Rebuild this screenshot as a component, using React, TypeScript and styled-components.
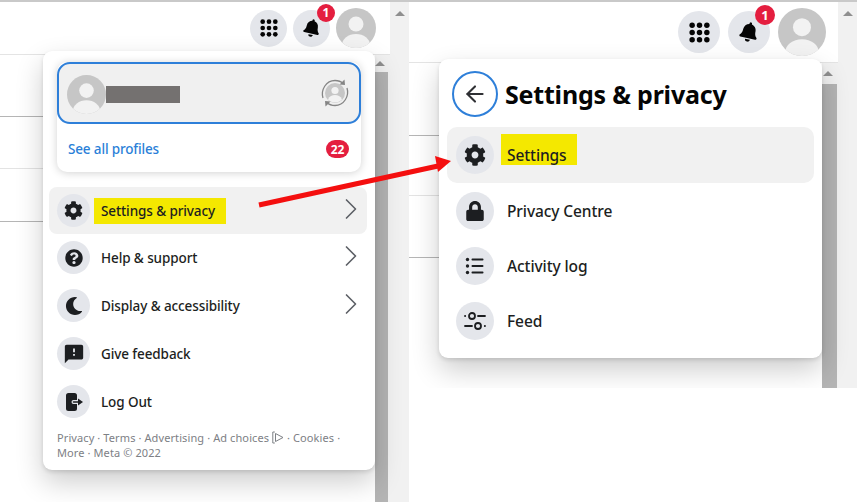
import { ReactNode } from 'react'
import styled, { createGlobalStyle } from 'styled-components'
import { FaBell, FaCog, FaLock, FaMoon, FaQuestionCircle } from 'react-icons/fa'
import { MdFeedback } from 'react-icons/md'
import { ArrowLeft, ChevronRight } from 'lucide-react'

const GlobalStyle = createGlobalStyle`
  body {
    margin: 0;
    background: #fff;
    font-family: "Noto Sans", "Open Sans", Arial, sans-serif;
    color: #1c1e21;
  }
`

const Page = styled.div`
  position: relative;
  display: flex;
  width: 857px;
  height: 502px;
  overflow: hidden;
  background: #fff;
`

const Shot = styled.div<{ $width: number; $height: number }>`
  position: relative;
  display: flex;
  flex: none;
  width: ${(p) => p.$width}px;
  height: ${(p) => p.$height}px;
  overflow: hidden;
  border-top: 2px solid #c9c9c9;
  box-sizing: border-box;
`

const Browser = styled.div`
  display: flex;
  flex: 1;
  flex-direction: column;
  min-width: 0;
`

const Header = styled.div<{ $height: number; $gap: number; $pad: number }>`
  display: flex;
  flex: none;
  align-items: center;
  justify-content: flex-end;
  gap: ${(p) => p.$gap}px;
  height: ${(p) => p.$height}px;
  padding-right: ${(p) => p.$pad}px;
  border-bottom: 1px solid #e4e4e4;
  box-sizing: border-box;
`

const HeaderButton = styled.div<{ $size: number }>`
  position: relative;
  display: flex;
  align-items: center;
  justify-content: center;
  width: ${(p) => p.$size}px;
  height: ${(p) => p.$size}px;
  border-radius: 50%;
  background: #e4e6eb;
  color: #050505;
`

const TiltedBell = styled(FaBell)`
  transform: rotate(12deg);
`

const Badge = styled.span<{ $size: number; $font: number }>`
  position: absolute;
  top: ${(p) => -p.$size / 3.2}px;
  right: -5px;
  display: flex;
  align-items: center;
  justify-content: center;
  width: ${(p) => p.$size}px;
  height: ${(p) => p.$size}px;
  border-radius: 50%;
  background: #e41e3f;
  color: #fff;
  font-size: ${(p) => p.$font}px;
  font-weight: 700;
`

const Body = styled.div`
  display: flex;
  flex: 1;
  min-height: 0;
`

const Content = styled.div`
  flex: 1;
`

const ContentRow = styled.div<{ $height: number; $line: string }>`
  height: ${(p) => p.$height}px;
  border-bottom: 1px solid ${(p) => p.$line};
`

const ScrollTrack = styled.div<{ $width: number; $thumb: number; $inset: number }>`
  display: flex;
  flex: none;
  flex-direction: column;
  width: ${(p) => p.$width}px;
  background: #f1f1f1;
  &::after {
    content: '';
    flex: 1;
    margin-top: ${(p) => p.$thumb}px;
    margin-right: ${(p) => p.$inset}px;
    background: #b4b4b4;
  }
`

const OuterTrack = styled.div`
  display: flex;
  flex: none;
  justify-content: center;
  width: 19px;
  padding-top: 9px;
  box-sizing: border-box;
  background: #f1f1f1;
`

const ScrollArrow = styled.span`
  flex: none;
  width: 0;
  height: 0;
  border-left: 5px solid transparent;
  border-right: 5px solid transparent;
  border-bottom: 5px solid #8f8f8f;
`

const InnerArrow = styled(ScrollArrow)<{ $top: number; $left: number }>`
  position: absolute;
  top: ${(p) => p.$top}px;
  left: ${(p) => p.$left}px;
`

const Menu = styled.div<{ $left: number; $top: number; $width: number; $height: number; $padLeft: number; $padRight: number }>`
  position: absolute;
  left: ${(p) => p.$left}px;
  top: ${(p) => p.$top}px;
  width: ${(p) => p.$width}px;
  height: ${(p) => p.$height}px;
  padding: 0 ${(p) => p.$padRight}px 0 ${(p) => p.$padLeft}px;
  box-sizing: border-box;
  background: #fff;
  border-radius: 9px;
  box-shadow: 0 12px 28px rgba(0, 0, 0, 0.2), 0 2px 4px rgba(0, 0, 0, 0.12);
`

const ProfileCard = styled.div`
  margin: 11px 6px 15px 8px;
  height: 110px;
  border-radius: 10px;
  box-shadow: 0 1px 8px rgba(0, 0, 0, 0.18);
`

const ActiveProfile = styled.div`
  display: flex;
  align-items: center;
  height: 62px;
  padding: 2px 9px 0 8px;
  box-sizing: border-box;
  border: 2px solid #2e7fd9;
  border-radius: 13px;
  background: #f0f0f0;
`

const RedactedName = styled.div`
  width: 74px;
  height: 17px;
  background: #747170;
`

const SwitchSlot = styled.div`
  margin: -3px 0 0 auto;
  display: flex;
`

const ProfilesFooter = styled.div`
  display: flex;
  align-items: center;
  justify-content: space-between;
  height: 48px;
  padding: 1px 12px 0 11px;
  color: #2a7fd8;
  font-size: 13.5px;
  font-weight: 500;
  letter-spacing: -0.15px;
`

const CountPill = styled.span`
  display: flex;
  align-items: center;
  justify-content: center;
  width: 23px;
  height: 18px;
  border-radius: 9px;
  background: #e41e3f;
  color: #fff;
  font-size: 12px;
  font-weight: 700;
`

const Row = styled.div<{ $height: number; $active?: boolean; $radius: number; $padX: number; $gap: number }>`
  display: flex;
  align-items: center;
  gap: ${(p) => p.$gap}px;
  height: ${(p) => p.$height}px;
  padding: 0 ${(p) => p.$padX}px;
  box-sizing: border-box;
  border-radius: ${(p) => p.$radius}px;
  background: ${(p) => (p.$active ? '#f1f1f1' : 'transparent')};
`

const RowIcon = styled.div<{ $size: number }>`
  display: flex;
  flex: none;
  align-items: center;
  justify-content: center;
  width: ${(p) => p.$size}px;
  height: ${(p) => p.$size}px;
  border-radius: 50%;
  background: #e4e6eb;
  color: #1c1e21;
`

const RowLabel = styled.span<{ $size: number }>`
  font-size: ${(p) => p.$size}px;
  font-weight: 500;
  letter-spacing: -0.1px;
`

const SmallMark = styled.mark`
  display: flex;
  align-items: center;
  width: 132px;
  height: 26px;
  margin-left: -7px;
  padding-left: 7px;
  box-sizing: border-box;
  background: #f4e800;
  color: inherit;
`

const LargeMark = styled.mark`
  display: flex;
  align-items: flex-end;
  width: 76px;
  height: 31px;
  margin: -12px 0 0 -6px;
  padding-left: 6px;
  line-height: 20px;
  box-sizing: border-box;
  background: #f4e800;
  color: inherit;
`

const RowChevron = styled(ChevronRight)`
  margin-left: auto;
  margin-right: -10px;
  margin-top: -3px;
  color: #5d6066;
`

const Legal = styled.div`
  margin: 4px 8px 0;
  color: #7d8085;
  font-size: 11px;
  line-height: 15px;
  letter-spacing: 0.1px;
`

const Links = styled.div`
  white-space: nowrap;
`

const TitleRow = styled.div`
  display: flex;
  align-items: center;
  gap: 7px;
  height: 66px;
  padding: 2px 0 0 5px;
`

const BackButton = styled.div`
  display: flex;
  align-items: center;
  justify-content: center;
  width: 46px;
  height: 46px;
  box-sizing: border-box;
  border: 2px solid #2e7fd9;
  border-radius: 50%;
  color: #2f3034;
`

const Title = styled.h1`
  margin: 0;
  color: #050505;
  font-size: 25px;
  font-weight: 700;
  letter-spacing: -0.2px;
`

const Arrow = styled.svg`
  position: absolute;
  left: 0;
  top: 0;
  pointer-events: none;
`

function Avatar({ size }: { size: number }) {
  return (
    <svg width={size} height={size} viewBox="0 0 40 40" style={{ flex: 'none' }}>
      <defs>
        <clipPath id={`clip-${size}`}>
          <circle cx="20" cy="20" r="20" />
        </clipPath>
      </defs>
      <circle cx="20" cy="20" r="20" fill="#c6c6c6" />
      <g clipPath={`url(#clip-${size})`} fill="#f2f2f2">
        <circle cx="20" cy="16" r="7.5" />
        <ellipse cx="20" cy="37" rx="14" ry="11" />
      </g>
    </svg>
  )
}

function GridDots({ size }: { size: number }) {
  const dots = [3, 10, 17]
  return (
    <svg width={size} height={size} viewBox="0 0 20 20" fill="#050505">
      {dots.map((y) => dots.map((x) => <circle key={`${x}-${y}`} cx={x} cy={y} r="2.6" />))}
    </svg>
  )
}

function SwitchProfile() {
  return (
    <svg width="30" height="30" viewBox="0 0 30 30" fill="none">
      <circle cx="15" cy="15" r="10" fill="#c6c6c6" />
      <circle cx="15" cy="12.5" r="3.6" fill="#f2f2f2" />
      <path d="M8 21.5c1.5-3.5 4-4.5 7-4.5s5.500 1 7 4.500c-2 2-4.500 3-7 3s-5-1-7-3Z" fill="#f2f2f2" />
      <path d="M3 20C.5 12 6 2.500 15 2.500c3.500 0 6 1 8 3" stroke="#858585" strokeWidth="1.300" />
      <path d="M27 10c2.500 8-3 17.500-12 17.500-3.500 0-6-1-8-3" stroke="#858585" strokeWidth="1.300" />
      <path d="m24.500 1.500.5 5.500-5.500-.5ZM5.500 28.500 5 23l5.500.5Z" fill="#858585" />
    </svg>
  )
}

function DoorOut() {
  return (
    <svg width="20" height="20" viewBox="0 0 20 20" fill="#1c1e21">
      <path d="M2 3.500A2.500 2.500 0 0 1 4.500 1h6A2.500 2.500 0 0 1 13 3.500V8H9.500a2 2 0 0 0 0 4H13v4.500a2.500 2.500 0 0 1-2.500 2.500h-6A2.500 2.500 0 0 1 2 16.500Z" />
      <path d="M9.500 9.200H14V6.500l5 3.500-5 3.500v-2.700H9.500a.8.8 0 0 1 0-1.600Z" />
    </svg>
  )
}

function ListLines() {
  return (
    <svg width="20" height="20" viewBox="0 0 20 20" fill="#1c1e21">
      <circle cx="2.500" cy="3.500" r="1.700" />
      <circle cx="2.500" cy="10" r="1.700" />
      <circle cx="2.500" cy="16.500" r="1.700" />
      <rect x="6.500" y="2.600" width="12" height="1.800" rx=".9" />
      <rect x="6.500" y="9.100" width="12" height="1.800" rx=".9" />
      <rect x="6.500" y="15.600" width="12" height="1.800" rx=".9" />
    </svg>
  )
}

function FeedSliders() {
  return (
    <svg width="22" height="20" viewBox="0 0 22 20" fill="none" stroke="#1c1e21" strokeWidth="1.800" strokeLinecap="round">
      <path d="M1 5h.2M14 5h7M1 15h7M20.800 15h.2" />
      <circle cx="8" cy="5" r="3" />
      <circle cx="14" cy="15" r="3" />
    </svg>
  )
}

function AdChoices() {
  return (
    <svg width="12" height="13" viewBox="0 0 12 13" fill="none" stroke="#7d8085" strokeWidth="1" style={{ verticalAlign: -2.500 }}>
      <path d="M.8 1h2M.8 1v11M.8 12h2" />
      <path d="M3.500 2.500v8l7.500-4Z" />
    </svg>
  )
}

function TopIcons({ button, avatar, badge, badgeFont, bell, dots }: {
  button: number
  avatar: number
  badge: number
  badgeFont: number
  bell: number
  dots: number
}) {
  return (
    <>
      <HeaderButton $size={button}>
        <GridDots size={dots} />
      </HeaderButton>
      <HeaderButton $size={button}>
        <TiltedBell size={bell} />
        <Badge $size={badge} $font={badgeFont}>1</Badge>
      </HeaderButton>
      <Avatar size={avatar} />
    </>
  )
}

function SmallRow({ icon, label, more }: { icon: ReactNode; label: string; more?: boolean }) {
  return (
    <Row $height={47.900} $radius={8} $padX={8} $gap={11}>
      <RowIcon $size={33}>{icon}</RowIcon>
      <RowLabel $size={13.500}>{label}</RowLabel>
      {more && <RowChevron size={36} strokeWidth={1.100} />}
    </Row>
  )
}

function LargeRow({ icon, label }: { icon: ReactNode; label: string }) {
  return (
    <Row $height={55} $radius={10} $padX={9} $gap={13}>
      <RowIcon $size={38}>{icon}</RowIcon>
      <RowLabel $size={15.500}>{label}</RowLabel>
    </Row>
  )
}

export default function App() {
  return (
    <Page>
      <GlobalStyle />
      <Shot $width={409} $height={502}>
        <Browser>
          <Header $height={53} $gap={6} $pad={14}>
            <TopIcons button={37} avatar={40} badge={18} badgeFont={12} bell={18} dots={18} />
          </Header>
          <Body>
            <Content>
              <ContentRow $height={61} $line="#b5b5b5" />
              <ContentRow $height={51} $line="#e3e3e3" />
              <ContentRow $height={52} $line="#b5b5b5" />
            </Content>
            <ScrollTrack $width={15} $thumb={17} $inset={2} />
            <InnerArrow $top={59} $left={375} />
          </Body>
        </Browser>
        <OuterTrack>
          <ScrollArrow />
        </OuterTrack>
        <Menu $left={43} $top={49} $width={332} $height={419} $padLeft={6} $padRight={8}>
          <ProfileCard>
            <ActiveProfile>
              <Avatar size={39} />
              <RedactedName />
              <SwitchSlot>
                <SwitchProfile />
              </SwitchSlot>
            </ActiveProfile>
            <ProfilesFooter>
              See all profiles
              <CountPill>22</CountPill>
            </ProfilesFooter>
          </ProfileCard>
          <Row $height={47} $active $radius={8} $padX={8} $gap={11}>
            <RowIcon $size={33}><FaCog size={19} /></RowIcon>
            <RowLabel $size={13.500}>
              <SmallMark>Settings &amp; privacy</SmallMark>
            </RowLabel>
            <RowChevron size={36} strokeWidth={1.100} />
          </Row>
          <SmallRow icon={<FaQuestionCircle size={18} />} label="Help & support" more />
          <SmallRow icon={<FaMoon size={18} />} label="Display & accessibility" more />
          <SmallRow icon={<MdFeedback size={22} />} label="Give feedback" />
          <SmallRow icon={<DoorOut />} label="Log Out" />
          <Legal>
            <Links>Privacy · Terms · Advertising · Ad choices <AdChoices /> · Cookies ·</Links>
            <Links>More · Meta © 2022</Links>
          </Legal>
        </Menu>
      </Shot>
      <Shot $width={448} $height={388}>
        <Browser>
          <Header $height={61} $gap={8} $pad={12}>
            <TopIcons button={42} avatar={48} badge={20} badgeFont={13} bell={20} dots={21} />
          </Header>
          <Body>
            <Content>
              <ContentRow $height={72} $line="#b5b5b5" />
              <ContentRow $height={59} $line="#e3e3e3" />
              <ContentRow $height={61} $line="#b5b5b5" />
            </Content>
            <ScrollTrack $width={16} $thumb={21} $inset={1} />
            <InnerArrow $top={69} $left={414} />
          </Body>
        </Browser>
        <OuterTrack>
          <ScrollArrow />
        </OuterTrack>
        <Menu $left={30} $top={57} $width={383} $height={299} $padLeft={8} $padRight={8}>
          <TitleRow>
            <BackButton>
              <ArrowLeft size={26} strokeWidth={1.900} />
            </BackButton>
            <Title>Settings &amp; privacy</Title>
          </TitleRow>
          <Row $height={56} $active $radius={10} $padX={9} $gap={13}>
            <RowIcon $size={38}><FaCog size={22} /></RowIcon>
            <RowLabel $size={15.500}>
              <LargeMark>Settings</LargeMark>
            </RowLabel>
          </Row>
          <LargeRow icon={<FaLock size={20} />} label="Privacy Centre" />
          <LargeRow icon={<ListLines />} label="Activity log" />
          <LargeRow icon={<FeedSliders />} label="Feed" />
        </Menu>
      </Shot>
      <Arrow width="857" height="502" viewBox="0 0 857 502">
        <path d="M259 205 438 166" stroke="#f40f0f" strokeWidth="5" fill="none" />
        <path d="M451 161 435 156 438 172Z" fill="#f40f0f" />
      </Arrow>
    </Page>
  )
}
